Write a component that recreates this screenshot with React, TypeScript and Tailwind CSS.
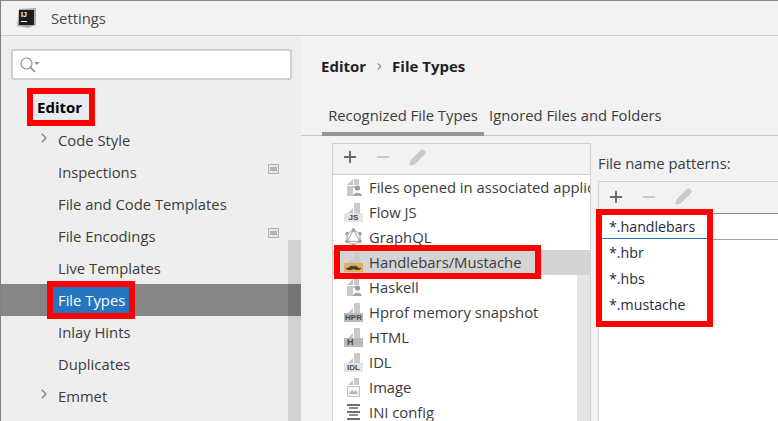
import { ChevronRight, Minus, Pencil, Plus } from "lucide-react";

const font = "font-['Open_Sans','Noto_Sans',sans-serif]";

const sideItems = [
  { label: "Code Style", arrow: true },
  { label: "Inspections", badge: true },
  { label: "File and Code Templates" },
  { label: "File Encodings", badge: true },
  { label: "Live Templates" },
  { label: "File Types", selected: true },
  { label: "Inlay Hints" },
  { label: "Duplicates" },
  { label: "Emmet", arrow: true },
];

const fileTypes = [
  { label: "Files opened in associated applications", icon: "user" },
  { label: "Flow JS", icon: "JS" },
  { label: "GraphQL", icon: "graphql" },
  { label: "Handlebars/Mustache", icon: "mustache", selected: true },
  { label: "Haskell", icon: "user" },
  { label: "Hprof memory snapshot", icon: "HPR" },
  { label: "HTML", icon: "H" },
  { label: "IDL", icon: "IDL" },
  { label: "Image", icon: "image" },
  { label: "INI config", icon: "ini" },
];

const patterns = ["*.handlebars", "*.hbr", "*.hbs", "*.mustache"];

function Toolbar({ className }: { className: string }) {
  return (
    <div className={`flex items-center border-b bg-[#f2f2f2] ${className}`}>
      <Plus size={18} strokeWidth={2.5} className="ml-[8px] text-[#666666]" />
      <Minus size={18} strokeWidth={2.5} className="ml-[15px] text-[#c9c9c9]" />
      <Pencil size={17} strokeWidth={2.5} className="ml-[17px] text-[#c9c9c9]" fill="#c9c9c9" />
    </div>
  );
}

function SheetCorner() {
  return (
    <svg width="14" height="11" viewBox="0 0 14 11" className="absolute left-[3px] top-0">
      <path d="M0 11 L6 5 L6 11 Z" fill="#c4c4c4" />
      <path d="M7 0 H13 V11 H7 Z" fill="#c9c9c9" />
    </svg>
  );
}

function FileIcon({ kind }: { kind: string }) {
  if (kind === "JS" || kind === "HPR" || kind === "H" || kind === "IDL") {
    const dark = kind === "HPR" || kind === "H";
    return (
      <div className="relative h-[19px] w-[19px] shrink-0">
        <SheetCorner />
        <div
          className={`absolute bottom-0 left-0 flex h-[9px] items-center justify-center font-['Liberation_Sans',sans-serif] font-bold leading-none text-[#4a4a4a] ${
            dark ? "bg-[#b9b9b9]" : "bg-[#e4e4e4]"
          } ${kind === "H" ? "w-[19px] justify-start pl-[3px] text-[9px]" : "w-[19px] text-[8px]"}`}
        >
          {kind}
        </div>
      </div>
    );
  }
  if (kind === "mustache") {
    return (
      <div className="relative h-[19px] w-[19px] shrink-0">
        <SheetCorner />
        <div className="absolute bottom-0 left-0 flex h-[9px] w-[19px] items-center justify-center bg-[#e2ae5c]">
          <svg width="15" height="6" viewBox="0 0 15 6">
            <path d="M0 4 C2 6 4 1 7.5 2.5 C11 1 13 6 15 4 C13 7 10 6 7.5 4.5 C5 6 2 7 0 4 Z" fill="#3a3a3a" stroke="#3a3a3a" strokeWidth="0.8" />
          </svg>
        </div>
      </div>
    );
  }
  if (kind === "graphql") {
    return (
      <svg width="19" height="19" viewBox="0 0 19 19" className="shrink-0" fill="none" stroke="#a3a3a3" strokeWidth="1">
        <path d="M9.5 2 L16 5.7 V13.3 L9.5 17 L3 13.3 V5.7 Z" />
        <path d="M9.5 2 L16 13.3 H3 Z" />
        <circle cx="9.5" cy="2" r="1.4" fill="#a3a3a3" />
        <circle cx="16" cy="5.7" r="1.4" fill="#a3a3a3" />
        <circle cx="16" cy="13.3" r="1.4" fill="#a3a3a3" />
        <circle cx="9.5" cy="17" r="1.4" fill="#a3a3a3" />
        <circle cx="3" cy="13.3" r="1.4" fill="#a3a3a3" />
        <circle cx="3" cy="5.7" r="1.4" fill="#a3a3a3" />
      </svg>
    );
  }
  if (kind === "user") {
    return (
      <svg width="19" height="19" viewBox="0 0 19 19" className="shrink-0">
        <path d="M3 7 L9 1 V7 Z" fill="#c4c4c4" />
        <path d="M10 1 H15 V7 H10 Z" fill="#c9c9c9" />
        <path d="M3 8 H9 V18 H3 Z" fill="#c9c9c9" />
        <path d="M9 8 H15 V10 H9 Z" fill="#c9c9c9" />
        <circle cx="13.5" cy="10" r="2.6" fill="#9c9c9c" />
        <path d="M9 18 C9 13.5 18 13.5 18 18 Z" fill="#a6a6a6" />
      </svg>
    );
  }
  if (kind === "image") {
    return (
      <svg width="19" height="19" viewBox="0 0 19 19" className="shrink-0">
        <path d="M4 7 L9 2 V7 Z" fill="#c4c4c4" />
        <path d="M10 0 H15 V7 H10 Z" fill="#c9c9c9" />
        <rect x="3.5" y="8.5" width="12" height="10" fill="#f4f4f4" stroke="#c4c4c4" />
        <path d="M5 16 L8 12 L10 14 L12 12.5 L14 16 Z" fill="#b5b5b5" />
      </svg>
    );
  }
  return (
    <svg width="19" height="19" viewBox="0 0 19 19" className="shrink-0" fill="#6e6e6e">
      <rect x="3" y="1" width="13" height="2" />
      <rect x="5" y="4" width="9" height="2" fill="#8e8e8e" />
      <rect x="3" y="8" width="13" height="2" />
      <rect x="5" y="11" width="9" height="2" fill="#8e8e8e" />
      <rect x="3" y="15" width="13" height="2" />
    </svg>
  );
}

export default function App() {
  return (
    <div className={`flex h-[421px] w-[778px] flex-col overflow-hidden border-l border-t border-l-[#808080] border-t-[#8a8a8a] bg-[#f2f2f2] text-[14.8px] text-[#3c3c3c] ${font}`}>
      {/* Title bar */}
      <div className="flex h-[35px] shrink-0 items-center border-b border-[#d0d0d0] bg-[#f2f2f2]">
        <svg width="21" height="21" viewBox="0 0 21 21" className="ml-[15px] shrink-0">
          <path d="M3 1 L20 0 L20 17 L12 20 L1 18 Z" fill="#ababab" />
          <rect x="3" y="2" width="15" height="15" fill="#1d1d1d" />
          <text x="5" y="9" fontSize="7" fontWeight="700" fontFamily="Liberation Sans" fill="#ffffff">IJ</text>
          <rect x="5" y="13" width="6" height="1" fill="#ffffff" />
        </svg>
        <span className="ml-[14px] text-[#4a4a4a]">Settings</span>
      </div>

      <div className="flex min-h-0 flex-1">
        {/* Sidebar */}
        <div className="relative w-[300px] shrink-0 bg-[#eeeeee] pt-[13px]">
          <div className="absolute bottom-0 right-0 top-[204px] z-10 w-[13px] bg-black/[0.12]" />
          <div className="ml-[10px] flex h-[31px] w-[281px] items-center rounded-[3px] border-2 border-[#cfcfcf] bg-white pl-[6px]">
            <svg width="22" height="18" viewBox="0 0 22 18" fill="none">
              <circle cx="7.5" cy="7.5" r="5.5" stroke="#8c8c8c" strokeWidth="1.2" />
              <path d="M11.5 11.5 L16 16" stroke="#8c8c8c" strokeWidth="1.6" />
              <path d="M15.5 6 H20.5 L18 9 Z" fill="#8c8c8c" />
            </svg>
          </div>
          <div className="mt-[10px] flex h-[34px] items-center pl-[32px]">
            <span className="inline-block h-[26px] w-[56px] bg-[#e6ebf0] pl-[4px] text-[15px] font-bold leading-[26px] text-black outline-[6px] outline-[#ff0000] outline-solid">
              Editor
            </span>
          </div>
          {sideItems.map((item) => (
            <div
              key={item.label}
              className={`relative flex h-8 items-center pl-[57px] ${item.selected ? "bg-[#868686]" : ""}`}
            >
              {item.arrow && (
                <ChevronRight size={16} strokeWidth={1.6} className="absolute left-[35px] top-[6px] text-[#7a7a7a]" />
              )}
              {item.selected ? (
                <span className="relative z-20 -ml-[5px] inline-block h-[26px] w-[76px] bg-[#2675bf] pl-[5px] leading-[26px] text-white outline-[6px] outline-[#ff0000] outline-solid">
                  {item.label}
                </span>
              ) : (
                <span>{item.label}</span>
              )}
              {item.badge && (
                <div className="absolute left-[267px] top-[8px] flex h-[10px] w-[11px] items-center justify-center border border-[#b4b4b4] bg-[#e4e4e4]">
                  <div className="h-[4px] w-[7px] bg-[#b4b4b4]" />
                </div>
              )}
            </div>
          ))}
        </div>

        {/* Main */}
        <div className="flex min-w-0 flex-1 flex-col bg-[#f2f2f2]">
          <div className="mt-[20px] flex h-[20px] items-center pl-[20px] text-[15px] font-bold text-[#1f1f1f]">
            <span>Editor</span>
            <ChevronRight size={11} strokeWidth={2} className="ml-[8px] mr-[7px] text-[#333]" />
            <span>File Types</span>
          </div>
          <div className="mt-[19px] flex h-[41px] items-start border-b border-[#c9c9c9] pl-[21px] leading-[24px]">
            <div className="h-[41px] w-[162px] shrink-0 border-b-[4px] border-[#969696] pt-[8px] text-center">
              Recognized File Types
            </div>
            <div className="pl-[5px] pt-[8px]">Ignored Files and Folders</div>
          </div>

          <div className="flex min-h-0 flex-1 pl-[31px] pt-[7px]">
            {/* File type list */}
            <div className="h-[300px] w-[259px] shrink-0 border border-b-0 border-[#d1d1d1] bg-white">
              <Toolbar className="h-[31px] border-[#d1d1d1] pb-[4px]" />
              <div className="relative">
                <div className="absolute bottom-0 right-0 top-[94px] z-10 w-[13px] bg-black/10" />
                {fileTypes.map((type) => (
                  <div
                    key={type.label}
                    className={`flex h-[25px] whitespace-nowrap pl-[11px] ${type.selected ? "relative z-20 items-start bg-[#d4d4d4]" : "items-center overflow-hidden"}`}
                  >
                    {type.selected ? (
                      <span className="-ml-[4px] mt-[1px] flex h-[22px] w-[195px] items-center gap-[6px] bg-[#d4d4d4] pl-[4px] outline-[6px] outline-[#ff0000] outline-solid">
                        <FileIcon kind={type.icon} />
                        {type.label}
                      </span>
                    ) : (
                      <span className="flex items-center gap-[6px]">
                        <FileIcon kind={type.icon} />
                        {type.label}
                      </span>
                    )}
                  </div>
                ))}
              </div>
            </div>

            {/* Patterns */}
            <div className="ml-[7px] flex min-w-0 flex-1 flex-col pt-[5px]">
              <div className="h-[30px] leading-[30px]">File name patterns:</div>
              <div className="mt-[3px] flex-1 border-l border-t border-[#d1d1d1] bg-white">
                <Toolbar className="h-[32px] border-[#8f8f8f] pb-[2px]" />
                <div className="relative">
                  <div className="absolute left-0 right-0 top-[25px] h-px bg-[#a0a0a0]" />
                  <div className="relative z-20 ml-[3px] mt-[1px] inline-block w-[105px] bg-white pb-[3px] text-[14.2px] outline-[6px] outline-[#ff0000] outline-solid">
                    {patterns.map((pattern, i) => (
                      <div
                        key={pattern}
                        className={
                          i === 0
                            ? "mb-px flex h-[24px] items-center border-b border-[#2675bf] pl-[7px] text-[#1f2a3a]"
                            : "flex h-[26px] items-center pl-[7px] text-[#1f2a3a]"
                        }
                      >
                        {pattern}
                      </div>
                    ))}
                  </div>
                </div>
              </div>
            </div>
          </div>
        </div>
      </div>
    </div>
  );
}
